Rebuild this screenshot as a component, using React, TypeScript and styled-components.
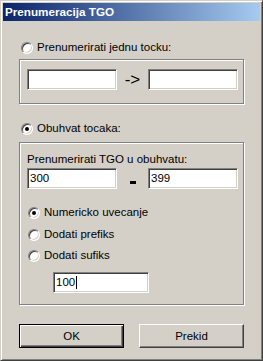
import React from "react";
import styled, { createGlobalStyle } from "styled-components";

const Global = createGlobalStyle`
  html, body { margin: 0; padding: 0; background: #d4d0c8; }
  * { box-sizing: border-box; }
`;

const FONT = `"Liberation Sans", Arial, sans-serif`;

const Window = styled.div`
  width: 263px;
  height: 361px;
  background: #d4d0c8;
  border-top: 1px solid #d4d0c8;
  border-left: 1px solid #d4d0c8;
  border-right: 1px solid #404040;
  border-bottom: 1px solid #404040;
  box-shadow: inset 1px 1px 0 #ffffff, inset -1px -1px 0 #808080;
  padding: 2px;
  display: flex;
  flex-direction: column;
  font-family: ${FONT};
  font-size: 11.5px;
  color: #000;
`;

const TitleBar = styled.div`
  height: 18px;
  background: linear-gradient(to right, #0a246a, #a6caf0);
  color: #fff;
  font-weight: bold;
  font-size: 11.7px;
  line-height: 18px;
  padding-left: 2px;
  flex: none;
`;

const Body = styled.div`
  display: flex;
  flex-direction: column;
  padding: 0 0 0 16px;
`;

const RadioRow = styled.label<{ $top: number; $indent?: number }>`
  display: flex;
  align-items: center;
  gap: 4px;
  height: 13px;
  margin-top: ${(p) => p.$top}px;
  margin-left: ${(p) => p.$indent ?? 2}px;
  line-height: 13px;
  white-space: nowrap;
`;

const RadioCircle = styled.span<{ $checked?: boolean }>`
  position: relative;
  width: 12px;
  height: 12px;
  border-radius: 50%;
  border-style: solid;
  border-width: 1px;
  border-color: #808080 #ffffff #ffffff #808080;
  background: #fff;
  box-shadow: inset 1px 1px 0 #404040, inset -1px -1px 0 #d4d0c8;
  flex: none;
  &::after {
    content: "";
    display: ${(p) => (p.$checked ? "block" : "none")};
    position: absolute;
    left: 3px;
    top: 3px;
    width: 4px;
    height: 4px;
    border-radius: 50%;
    background: #000;
  }
`;

const Group = styled.div<{ $top: number; $height: number }>`
  width: 225px;
  height: ${(p) => p.$height}px;
  margin-top: ${(p) => p.$top}px;
  border: 1px solid #808080;
  box-shadow: inset 1px 1px 0 #fff, 1px 1px 0 #fff;
  display: flex;
  flex-direction: column;
  padding: 0 0 0 7px;
`;

const PairRow = styled.div<{ $top: number }>`
  display: flex;
  align-items: center;
  margin-top: ${(p) => p.$top}px;
`;

const Field = styled.div<{ $width?: number }>`
  width: ${(p) => p.$width ?? 90}px;
  height: 21px;
  background: #fff;
  border-style: solid;
  border-width: 1px;
  border-color: #808080 #ffffff #ffffff #808080;
  box-shadow: inset 1px 1px 0 #404040, inset -1px -1px 0 #d4d0c8;
  padding: 0 2px;
  line-height: 19px;
  font-size: 11.5px;
  flex: none;
  display: flex;
  align-items: center;
`;

const Caret = styled.span`
  display: inline-block;
  width: 1px;
  height: 13px;
  background: #000;
  margin-left: 1px;
`;

const Arrow = styled.div`
  width: 31px;
  text-align: center;
  font-size: 17px;
  line-height: 19px;
  flex: none;
`;

const Dash = styled.div`
  width: 31px;
  display: flex;
  justify-content: center;
  padding-top: 7px;
  flex: none;
  &::before {
    content: "";
    width: 6px;
    height: 3px;
    background: #000;
  }
`;

const Caption = styled.div`
  margin-top: 9px;
  line-height: 14px;
`;

const FieldIndent = styled.div`
  margin-top: 10px;
  margin-left: 26px;
`;

const ButtonRow = styled.div`
  display: flex;
  gap: 15px;
  margin-top: 19px;
`;

const Button = styled.button<{ $default?: boolean }>`
  width: 105px;
  height: 24px;
  background: #d4d0c8;
  font-family: ${FONT};
  font-size: 11.5px;
  color: #000;
  padding: 0;
  border-style: solid;
  border-width: 1px;
  border-color: ${(p) =>
    p.$default ? "#000" : "#ffffff #404040 #404040 #ffffff"};
  box-shadow: ${(p) =>
    p.$default
      ? "inset 1px 1px 0 #fff, inset -1px -1px 0 #404040, inset -2px -2px 0 #808080"
      : "inset -1px -1px 0 #808080"};
`;

export default function App() {
  return (
    <>
      <Global />
      <Window>
        <TitleBar>Prenumeracija TGO</TitleBar>
        <Body>
          <RadioRow $top={20}>
            <RadioCircle />
            Prenumerirati jednu tocku:
          </RadioRow>
          <Group $top={5} $height={45}>
            <PairRow $top={9}>
              <Field />
              <Arrow>-&gt;</Arrow>
              <Field />
            </PairRow>
          </Group>
          <RadioRow $top={18}>
            <RadioCircle $checked />
            Obuhvat tocaka:
          </RadioRow>
          <Group $top={7} $height={163}>
            <Caption>Prenumerirati TGO u obuhvatu:</Caption>
            <PairRow $top={2}>
              <Field>300</Field>
              <Dash />
              <Field>399</Field>
            </PairRow>
            <RadioRow $top={17} $indent={1}>
              <RadioCircle $checked />
              Numericko uvecanje
            </RadioRow>
            <RadioRow $top={9} $indent={1}>
              <RadioCircle />
              Dodati prefiks
            </RadioRow>
            <RadioRow $top={8} $indent={1}>
              <RadioCircle />
              Dodati sufiks
            </RadioRow>
            <FieldIndent>
              <Field $width={96}>
                100
                <Caret />
              </Field>
            </FieldIndent>
          </Group>
          <ButtonRow>
            <Button $default>OK</Button>
            <Button>Prekid</Button>
          </ButtonRow>
        </Body>
      </Window>
    </>
  );
}
